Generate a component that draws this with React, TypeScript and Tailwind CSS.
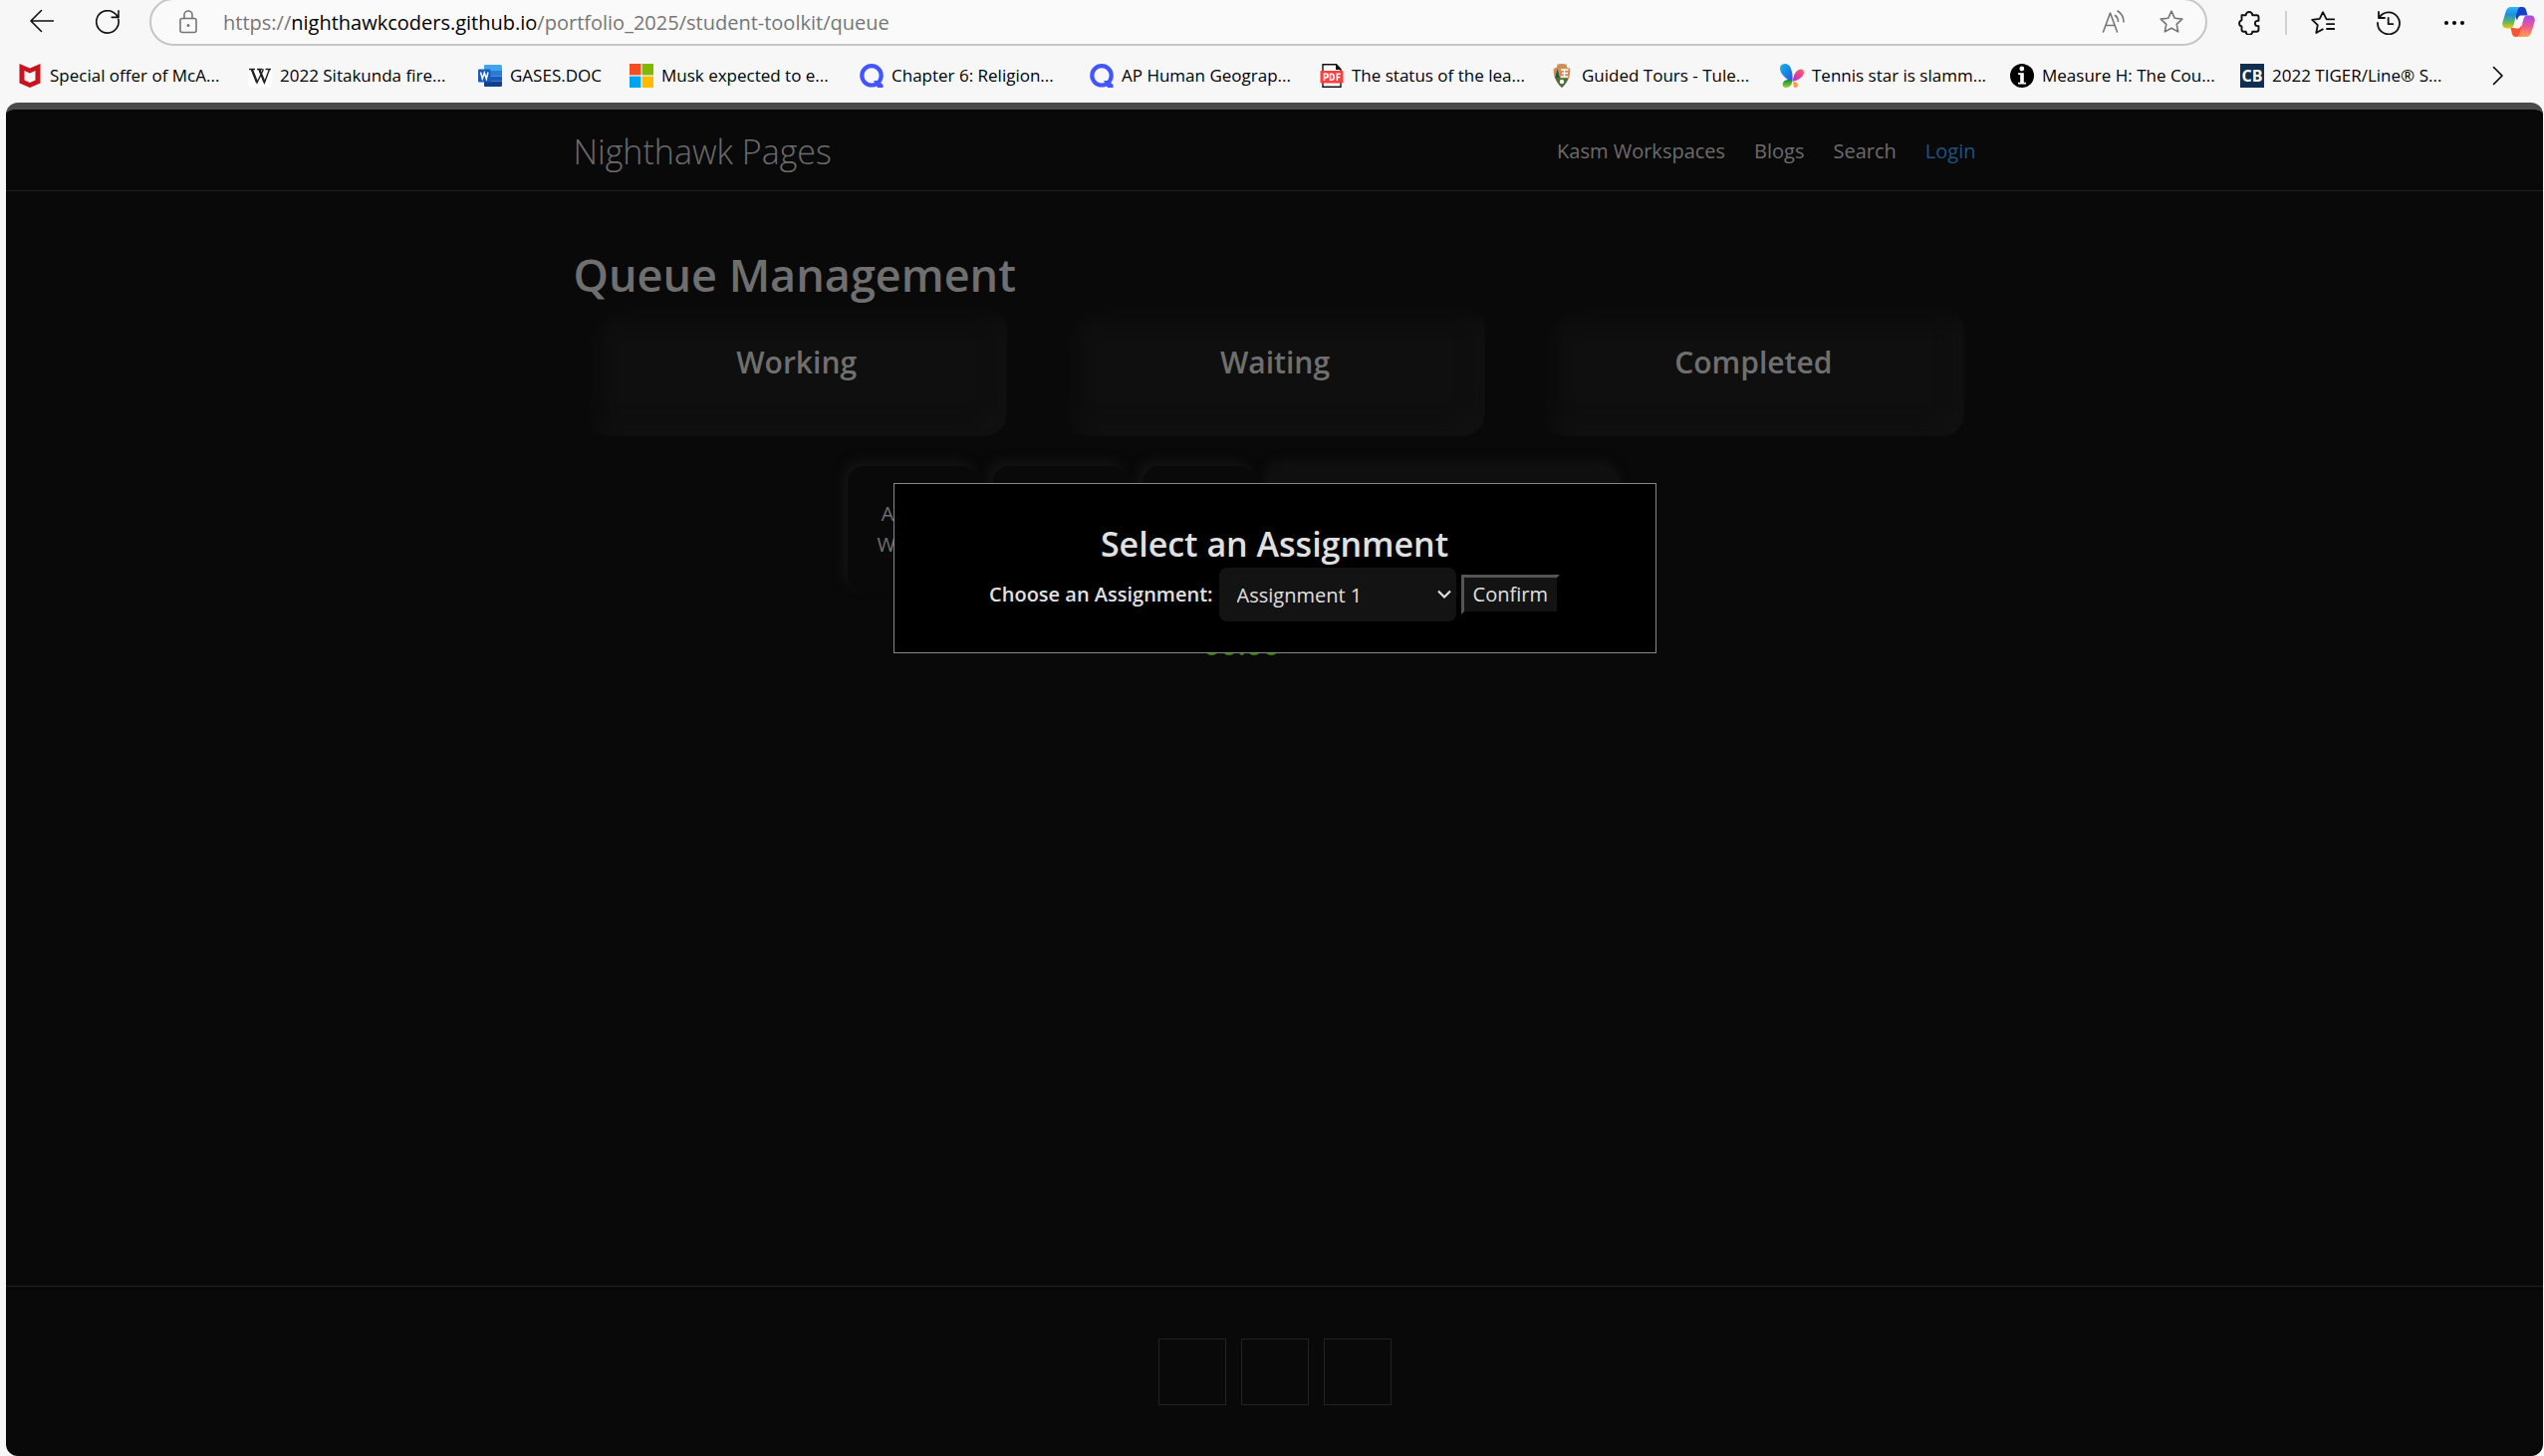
import React from "react";

type IconProps = { className?: string; children: React.ReactNode; box?: string };

function Icon({ className = "size-6", children, box = "0 0 24 24" }: IconProps) {
  return (
    <svg viewBox={box} className={`shrink-0 ${className}`} fill="none" aria-hidden="true">
      {children}
    </svg>
  );
}

const line = {
  stroke: "currentColor",
  strokeWidth: 1.6,
  strokeLinecap: "round" as const,
  strokeLinejoin: "round" as const,
};

const STAR = "M12 1.2l3.2 7 7.6.9-5.6 5.2 1.5 7.6L12 18.2l-6.7 3.7 1.5-7.6L1.2 9.1l7.6-.9z";

function Toolbar() {
  return (
    <div className="flex h-[46px] items-start">
      <button aria-label="Back" className="mt-[9px] ml-[30px]">
        <Icon>
          <path {...line} d="M23.500 12H1M11.500 1.500L1 12l10.500 10.500" />
        </Icon>
      </button>
      <button aria-label="Refresh" className="mt-[10px] ml-[42px]">
        <Icon>
          <path {...line} d="M22.800 9.200A11.200 11.200 0 1 1 17.500 2.200c2 1 3.600 2.700 4.700 4.800M23 .8v6.600h-6.800" />
        </Icon>
      </button>
      <div className="-mt-[2px] ml-[30px] flex h-12 flex-1 items-center rounded-full border-2 border-[#c6c6c6] bg-[#fafafa] pr-[22px] pl-7 text-[#767676]">
        <Icon className="h-6 w-[18px]" box="0 0 18 24">
          <rect {...line} x="1" y="8.5" width="16" height="14" rx="2" />
          <path {...line} d="M5 8.500V5a4 4 0 0 1 8 0v3.500" />
          <circle cx="9" cy="15.5" r="1.5" fill="currentColor" />
        </Icon>
        <div
          role="textbox"
          aria-label="Address"
          className="ml-[26px] flex-1 pt-px text-[20px] leading-7 whitespace-nowrap"
        >
          https://<span className="text-black">nighthawkcoders.github.io</span>
          /portfolio_2025/student-toolkit/queue
        </div>
        <button aria-label="Read aloud">
          <Icon>
            <path {...line} d="M1.500 22L8.500 3l7 19M4 15.500h9M13.500 5.500c2 1.500 3 3.500 3 6M16 1c4 2.500 6 6 6 11" />
          </Icon>
        </button>
        <button aria-label="Add to favorites" className="ml-[34px]">
          <Icon>
            <path {...line} d={STAR} />
          </Icon>
        </button>
      </div>
      <button aria-label="Extensions" className="mt-[11px] ml-[30px]">
        <Icon>
          <path
            {...line}
            strokeWidth={1.9}
            d="M4.500 4.300h4.200a3.300 3.300 0 0 1 6.600 0h4.200a2 2 0 0 1 2 2v3.600h-1a2.600 2.600 0 0 0 0 5.200h1v3.600a2 2 0 0 1-2 2h-4.200a3.300 3.300 0 0 1-6.600 0H6.500a2 2 0 0 1-2-2v-3.200a3.200 3.200 0 0 1 0-6.200z"
          />
        </Icon>
      </button>
      <div className="mt-[11px] ml-6 h-6 w-[2px] bg-[#d0d0d0]" />
      <button aria-label="Favorites" className="mt-[11px] ml-6">
        <Icon>
          <path
            {...line}
            strokeWidth={1.8}
            d="M23.300 8.300H15.700L12 1.200 8.800 7.800l-7.600 1 5.600 5.400-1.500 7.800 6.500-3.600M16 13.200h7.300M16 18h7.300"
          />
        </Icon>
      </button>
      <button aria-label="History" className="mt-[11px] ml-[42px]">
        <Icon>
          <path {...line} strokeWidth={1.8} d="M1 12A11 11 0 1 0 2.800 6.300M2 1v6h6M11.700 6.800V13.200h4.600" />
        </Icon>
      </button>
      <button aria-label="Settings and more" className="mt-[11px] ml-[42px]">
        <Icon>
          <circle cx="4" cy="12" r="2" fill="#000" />
          <circle cx="12" cy="12" r="2" fill="#000" />
          <circle cx="20" cy="12" r="2" fill="#000" />
        </Icon>
      </button>
      <button aria-label="Copilot" className="mt-[7px] mr-[9px] ml-9">
        <Icon className="h-[30px] w-[33px]" box="0 0 33 30">
          <defs>
            <linearGradient id="cpA" x1="0" y1="0" x2="0" y2="1">
              <stop offset="0" stopColor="#2bb8f5" />
              <stop offset=".35" stopColor="#1d8fe0" />
              <stop offset=".7" stopColor="#5fb760" />
              <stop offset="1" stopColor="#f3c50c" />
            </linearGradient>
            <linearGradient id="cpB" x1="0" y1="0" x2="0" y2="1">
              <stop offset="0" stopColor="#a04df0" />
              <stop offset=".5" stopColor="#ee5596" />
              <stop offset="1" stopColor="#ffa04d" />
            </linearGradient>
          </defs>
          <path d="M9 0h11c2.500 0 3.500 1 4.200 3.500L25.500 8.500h-6c-3 0-3.500 2-4.500 5z" fill="#1740c8" />
          <path d="M24 30H13.500c-2 0-3-1-3.700-3.500L8.500 21h5c3 0 3.500-2 4.500-5z" fill="#f4562f" />
          <path d="M9 0h9c-2 1-2.600 3-3.300 6l-3 11.500c-.8 2.700-1.700 4-4.200 4H4.500C1 21.500-.5 18.500.5 15L3.700 4.500C4.700 1.500 6 0 9 0z" fill="url(#cpA)" />
          <path d="M24 30h-9c2-1 2.600-3 3.300-6l3-11.500c.8-2.700 1.700-4 4.200-4h3c3.500 0 5 3 4 6.500l-3.200 10.500C28.300 28.500 27 30 24 30z" fill="url(#cpB)" />
          <path d="M18.500 9h3.500l-3.500 10.500c-.6 1.500-1.500 2-3 2h-3.500c1.200-.6 1.700-1.500 2.200-3.200l2-6.500c.5-1.700 1-2.500 2.300-2.800z" fill="#fafafa" />
        </Icon>
      </button>
    </div>
  );
}

const QuizletIcon = (
  <Icon>
    <circle cx="12" cy="11.8" r="9.7" stroke="#4255ff" strokeWidth="4.2" />
    <path d="M14 17h4.500L23.500 21v3h-5.500z" fill="#4255ff" />
  </Icon>
);

const bookmarks: { label: string; icon: React.ReactNode; narrow?: boolean }[] = [
  {
    label: "Special offer of McA...",
    icon: (
      <Icon>
        <path d="M1.500 0l10.500 4.500L22.500 0v19.500L12 24 1.500 19.500zM6.500 7v9.500L12 19l5.500-2.500V7L12 9.500z" fill="#c8141e" fillRule="evenodd" />
      </Icon>
    ),
  },
  {
    label: "2022 Sitakunda fire...",
    icon: (
      <Icon>
        <rect width="24" height="24" rx="4" fill="#fff" />
        <path
          d="M1 5.500h6M9 5.500h5.500M17.500 5.500H23M3.500 5.500l5.500 13.500 6.500-13.500M11 5.500l5.500 13.500L21.500 5.500"
          stroke="#222"
          strokeWidth="1.4"
        />
        <path d="M4 6l5 12.500M11.500 6l5 12.500" stroke="#222" strokeWidth="2.2" />
      </Icon>
    ),
  },
  {
    label: "GASES.DOC",
    narrow: true,
    icon: (
      <Icon>
        <path d="M7 1h15.500a1.500 1.500 0 0 1 1.500 1.500V7H6V2a1 1 0 0 1 1-1z" fill="#41a5ee" />
        <path d="M6 7h18v5.500H6z" fill="#2b7cd3" />
        <path d="M6 12.500h18V17.500H6z" fill="#185abd" />
        <path d="M6 17.500h18v4a1.500 1.500 0 0 1-1.500 1.500H7a1 1 0 0 1-1-1z" fill="#103f91" />
        <rect y="5.5" width="12.5" height="13" rx="1" fill="#185abd" />
        <path d="M2.500 8.500L4.300 15l2-6 2 6L10 8.500" stroke="#fff" strokeWidth="1.5" />
      </Icon>
    ),
  },
  {
    label: "Musk expected to e...",
    icon: (
      <Icon>
        <path d="M0 0h11.400v11.400H0z" fill="#f25022" />
        <path d="M12.600 0H24v11.400H12.600z" fill="#7fba00" />
        <path d="M0 12.600h11.400V24H0z" fill="#00a4ef" />
        <path d="M12.600 12.600H24V24H12.600z" fill="#ffb900" />
      </Icon>
    ),
  },
  { label: "Chapter 6: Religion...", icon: QuizletIcon },
  { label: "AP Human Geograp...", icon: QuizletIcon },
  {
    label: "The status of the lea...",
    icon: (
      <Icon>
        <path d="M3 .7h13.500L21 5.500v17.800H3z" fill="#fff" stroke="#111" strokeWidth="1.4" />
        <path d="M16 .5V6h5.200z" fill="#111" />
        <rect x=".5" y="7" width="23" height="12.5" rx=".8" fill="#ff3e3e" />
        <path
          d="M4.500 17v-7h1.600a1.900 1.900 0 0 1 0 3.900H4.500M10.500 10.200v6h1.200c3.400 0 3.400-6 0-6zM17.300 17v-6.800h3.400M17.300 13.500h3"
          stroke="#fff"
          strokeWidth="1.6"
        />
      </Icon>
    ),
  },
  {
    label: "Guided Tours - Tule...",
    icon: (
      <Icon>
        <path d="M7.500 .5Q12-.5 16.500 .5l.5 3 3.300 1.500c.5 6-1.300 13-8.300 19C5 18 3.200 11 3.700 5L7 3.500z" fill="#cf8e57" />
        <path d="M5.500 14.500h13C17 18.500 15 21.500 12 24c-3-2.500-5-5.500-6.500-9.500z" fill="#47703f" />
        <path d="M7.500 5l2.500 9.500H5z" fill="#1f5a3a" />
        <path d="M11 6h7.500M12 9.500h6M11 13h7M14.500 6v7" stroke="#fff" strokeWidth="1.3" />
        <circle cx="12" cy="18" r="2.2" fill="#fff" />
      </Icon>
    ),
  },
  {
    label: "Tennis star is slamm...",
    icon: (
      <Icon>
        <defs>
          <linearGradient id="mA" x1="0" y1="0" x2="1" y2="1">
            <stop offset="0" stopColor="#12b9e6" />
            <stop offset="1" stopColor="#2a50e0" />
          </linearGradient>
          <linearGradient id="mB" x1="1" y1="0" x2="0" y2="1">
            <stop offset="0" stopColor="#ff6a4d" />
            <stop offset="1" stopColor="#c21be0" />
          </linearGradient>
          <linearGradient id="mC" x1="0" y1="0" x2="0" y2="1">
            <stop offset="0" stopColor="#0b8a4a" />
            <stop offset="1" stopColor="#a6cf2a" />
          </linearGradient>
        </defs>
        <path d="M0 4.500C0 1 3 0 6 0c5 1 7 8 6.500 18C8 17 0 11 0 4.500z" fill="url(#mA)" />
        <path d="M13 17.500C13 11 17 5.500 21 5.500c3 0 3.500 3 2.500 5.500-1.500 3-6 6-10.500 6.500z" fill="url(#mB)" />
        <path d="M12 16.500c.5 4-2 7.500-6 7.500-5 0-4-6.500 0-7.500 2-.6 4-.6 6 0z" fill="url(#mC)" />
        <path d="M13.500 18c2 0 4.500 1 4.500 3.500 0 2-2 2.500-3.500 2.500-1-1.500-1.500-3.500-1-6z" fill="#ff9d45" />
      </Icon>
    ),
  },
  {
    label: "Measure H: The Cou...",
    icon: (
      <Icon>
        <circle cx="12" cy="12" r="12" fill="#000" />
        <circle cx="11.8" cy="5" r="2.4" fill="#fff" />
        <path d="M8 9.200h5.800v9.600H16v1.700H8v-1.700h2.200v-7.900H8z" fill="#fff" />
      </Icon>
    ),
  },
  {
    label: "2022 TIGER/Line® S...",
    icon: (
      <span className="flex size-6 shrink-0 items-center justify-center bg-[#112e51] text-[16px] leading-6 font-bold text-white">
        CB
      </span>
    ),
  },
];

function BookmarksBar() {
  return (
    <nav aria-label="Favorites bar" className="flex h-[57px] items-center pt-[3px] pl-[18px] text-black">
      {bookmarks.map((b) => (
        <a
          key={b.label}
          href="#"
          className={`flex shrink-0 items-center gap-2 text-[17px] leading-6 whitespace-nowrap ${b.narrow ? "w-[152px]" : "w-[231px]"}`}
        >
          {b.icon}
          {b.label}
        </a>
      ))}
      <button aria-label="More favorites" className="mr-10 ml-auto">
        <Icon className="h-5 w-3" box="0 0 12 20">
          <path {...line} d="M1.500 1.500L10 10l-8.500 8.500" />
        </Icon>
      </button>
    </nav>
  );
}

function SiteHeader() {
  return (
    <header className="border-b border-[#202020] bg-[#090909]">
      <div className="mx-auto flex h-[81px] max-w-[1408px] items-center justify-between pt-[2px]">
        <a href="#" className="text-[34px] leading-[48px] font-light text-[#6c6c6c]">
          Nighthawk Pages
        </a>
        <nav className="flex gap-[29px] text-[20px] leading-8 text-[#6c6c6c]">
          <a href="#">Kasm Workspaces</a>
          <a href="#">Blogs</a>
          <a href="#">Search</a>
          <a href="#" className="text-[#1c5482]">Login</a>
        </nav>
      </div>
    </header>
  );
}

function Queue() {
  return (
    <main className="mx-auto w-full max-w-[1408px] flex-1 pt-[52px] text-[#6f6f6f]">
      <h1 className="text-[45px] leading-[64px] font-semibold">Queue Management</h1>
      <div className="grid grid-cols-3 gap-[58px] pr-3 pl-[13px]">
        {["Working", "Waiting", "Completed"].map((name) => (
          <section
            key={name}
            className="h-[130px] rounded-[22px] bg-[#0f0f0f] pt-9 text-center shadow-[inset_8px_8px_20px_#090909,inset_-8px_-8px_20px_#131313]"
          >
            <h2 className="text-[30px] leading-10 font-semibold">{name}</h2>
          </section>
        ))}
      </div>
      <div className="mt-[30px] mr-[82px] flex justify-center gap-4">
        <button className="h-[125px] w-[130px] rounded-2xl bg-[#090909] px-6 text-[20px] leading-[31px] shadow-[-4px_-4px_12px_#151515]">
          Add to Waiting
        </button>
        <div className="h-[125px] w-[134px] rounded-2xl bg-[#090909] shadow-[-4px_-4px_12px_#151515]" />
        <div className="h-[125px] w-[112px] rounded-2xl bg-[#090909] shadow-[-4px_-4px_12px_#151515]" />
        <div className="h-[125px] w-[352px] rounded-2xl bg-[#0f0f0f] shadow-[-4px_-4px_12px_#131313]" />
      </div>
      <p className="mt-[34px] mr-[66px] text-center text-[30px] leading-10 font-semibold text-[#338000]">00:00</p>
    </main>
  );
}

function AssignmentDialog() {
  return (
    <div
      role="dialog"
      aria-labelledby="dialog-title"
      className="absolute top-[375px] left-1/2 flex h-[171px] w-[766px] -translate-x-1/2 flex-col items-center border border-[#888] bg-black pt-9 text-[#e0e0e0]"
    >
      <h2 id="dialog-title" className="text-[34px] leading-[48px] font-semibold">
        Select an Assignment
      </h2>
      <div className="flex items-center text-[20px] leading-8">
        <label htmlFor="assignment" className="font-semibold">
          Choose an Assignment:
        </label>
        <div className="relative ml-[6px]">
          <select
            id="assignment"
            className="h-[54px] w-[238px] appearance-none rounded-lg bg-[#131313] pt-px pl-[18px]"
          >
            <option>Assignment 1</option>
          </select>
          <Icon className="pointer-events-none absolute top-[22px] right-[5px] h-[10px] w-[14px]" box="0 0 14 10">
            <path d="M1 1.500l6 6 6-6" stroke="currentColor" strokeWidth="2.2" />
          </Icon>
        </div>
        <button className="ml-[5px] h-10 border-[3px] border-t-[#555] border-r-black border-b-black border-l-[#555] bg-[#131313] px-[9px] leading-[34px]">
          Confirm
        </button>
      </div>
    </div>
  );
}

export default function App() {
  return (
    <div className="flex min-h-screen flex-col overflow-hidden bg-[#f7f7f7] font-['Open_Sans','Noto_Sans',sans-serif] text-[#111]">
      <Toolbar />
      <BookmarksBar />
      <div className="relative mr-px ml-[6px] flex flex-1 flex-col overflow-hidden rounded-xl border-t-[7px] border-[#4b4b4b] bg-[#090909]">
        <SiteHeader />
        <Queue />
        <footer className="flex justify-center gap-[15px] border-t border-[#202020] pt-[52px] pb-[51px]">
          {["GitHub", "RSS", "YouTube"].map((name) => (
            <a key={name} href="#" aria-label={name} className="h-[67px] w-[68px] border border-[#222]" />
          ))}
        </footer>
        <AssignmentDialog />
      </div>
    </div>
  );
}
